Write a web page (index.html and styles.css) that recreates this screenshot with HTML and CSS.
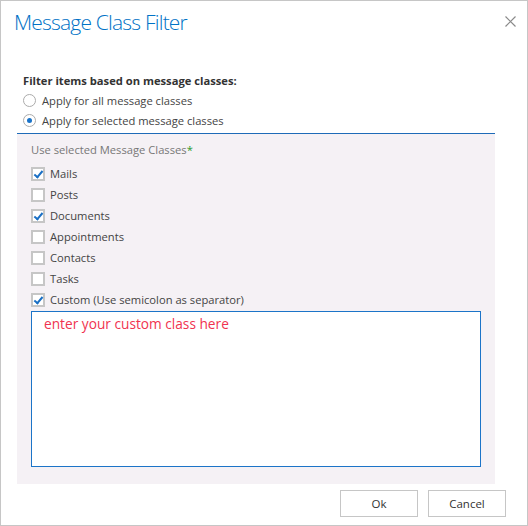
FILE: index.html
```html
<!DOCTYPE html>
<html>
<head>
<meta charset="utf-8">
<link rel="stylesheet" href="styles.css">
</head>
<body>
<div class="dialog">
  <div class="header">
    <h1 class="title">Message Class Filter</h1>
    <button class="close" aria-label="Close">
      <svg width="11" height="11" viewBox="0 0 11 11"><path d="M0.5 0.5L10.5 10.5M10.5 0.5L0.5 10.5" stroke="#8a8a8a" stroke-width="1.2" fill="none"/></svg>
    </button>
  </div>
  <div class="content">
    <div class="section">
      <div class="section-head">Filter items based on message classes:</div>
      <label class="radio-row"><span class="radio"></span>Apply for all message classes</label>
      <label class="radio-row"><span class="radio checked"></span>Apply for selected message classes</label>
    </div>
    <div class="panel">
      <div class="panel-label">Use selected Message Classes<span class="req">*</span></div>
      <div class="check-row"><span class="check on"></span>Mails</div>
      <div class="check-row"><span class="check"></span>Posts</div>
      <div class="check-row"><span class="check on"></span>Documents</div>
      <div class="check-row"><span class="check"></span>Appointments</div>
      <div class="check-row"><span class="check"></span>Contacts</div>
      <div class="check-row"><span class="check"></span>Tasks</div>
      <div class="check-row"><span class="check on"></span>Custom (Use semicolon as separator)</div>
      <div class="textarea">enter your custom class here</div>
    </div>
    <div class="buttons">
      <button class="btn">Ok</button>
      <button class="btn">Cancel</button>
    </div>
  </div>
</div>
</body>
</html>
```
FILE: styles.css
```css
html, body {
  margin: 0;
  padding: 0;
  background: #fff;
}
.dialog {
  width: 528px;
  height: 526px;
  box-sizing: border-box;
  border: 1px solid #c6c6c6;
  background: #fff;
  font-family: "Open Sans", sans-serif;
  font-size: 11.2px;
  color: #444;
  display: flex;
  flex-direction: column;
}
.header {
  display: flex;
  justify-content: space-between;
  align-items: flex-start;
  height: 72px;
}
.title {
  margin: 0;
  padding: 7px 0 0 13px;
  font-family: "Open Sans", sans-serif;
  font-weight: 300;
  font-size: 21px;
  letter-spacing: -0.8px;
  color: #0072c6;
  line-height: 28px;
}
.close {
  border: 0;
  background: none;
  padding: 0;
  margin: 15px 11px 0 0;
  width: 11px;
  height: 11px;
  display: flex;
}
.content {
  margin: 0 32px 0 16px;
  display: flex;
  flex-direction: column;
}
.section {
  padding-left: 6px;
  padding-bottom: 3px;
}
.section-head {
  font-weight: bold;
  color: #333;
  line-height: 16px;
  height: 17px;
}
.radio-row {
  display: flex;
  align-items: center;
  height: 20px;
  gap: 6px;
}
.radio {
  width: 11px;
  height: 11px;
  border: 1px solid #ababab;
  border-radius: 50%;
  background: #fff;
  position: relative;
  box-sizing: content-box;
}
.radio.checked::after {
  content: "";
  position: absolute;
  left: 3px;
  top: 3px;
  width: 5px;
  height: 5px;
  border-radius: 50%;
  background: #1a73c8;
}
.panel {
  background: #f5f1f5;
  border-top: 1px solid #1e6bb8;
  padding: 8px 14px 17px 14px;
  display: flex;
  flex-direction: column;
}
.panel-label {
  color: #777;
  line-height: 16px;
  height: 21px;
}
.req {
  color: #2b9a2b;
}
.check-row {
  display: flex;
  align-items: center;
  height: 21px;
  gap: 5px;
  color: #444;
}
.check {
  width: 10px;
  height: 10px;
  border: 2px solid #c6c6c6;
  background: #fff;
  position: relative;
  box-sizing: content-box;
}
.check.on::after {
  content: "";
  position: absolute;
  left: 3px;
  top: 0px;
  width: 3px;
  height: 7px;
  border: solid #1a6fc4;
  border-width: 0 2px 2px 0;
  transform: rotate(40deg);
}
.textarea {
  box-sizing: border-box;
  margin-top: 1px;
  height: 156px;
  border: 1px solid #1c74c8;
  background: #fff;
  color: #f0334f;
  font-size: 13.7px;
  padding: 2px 12px;
  line-height: 20px;
}
.buttons {
  display: flex;
  justify-content: flex-end;
  gap: 10px;
  margin-top: 6px;
  margin-right: -11px;
}
.btn {
  width: 78px;
  height: 27px;
  border: 1px solid #c6c6c6;
  background: #fff;
  font-family: "Open Sans", sans-serif;
  font-size: 11.5px;
  color: #333;
  padding: 0;
}
```
